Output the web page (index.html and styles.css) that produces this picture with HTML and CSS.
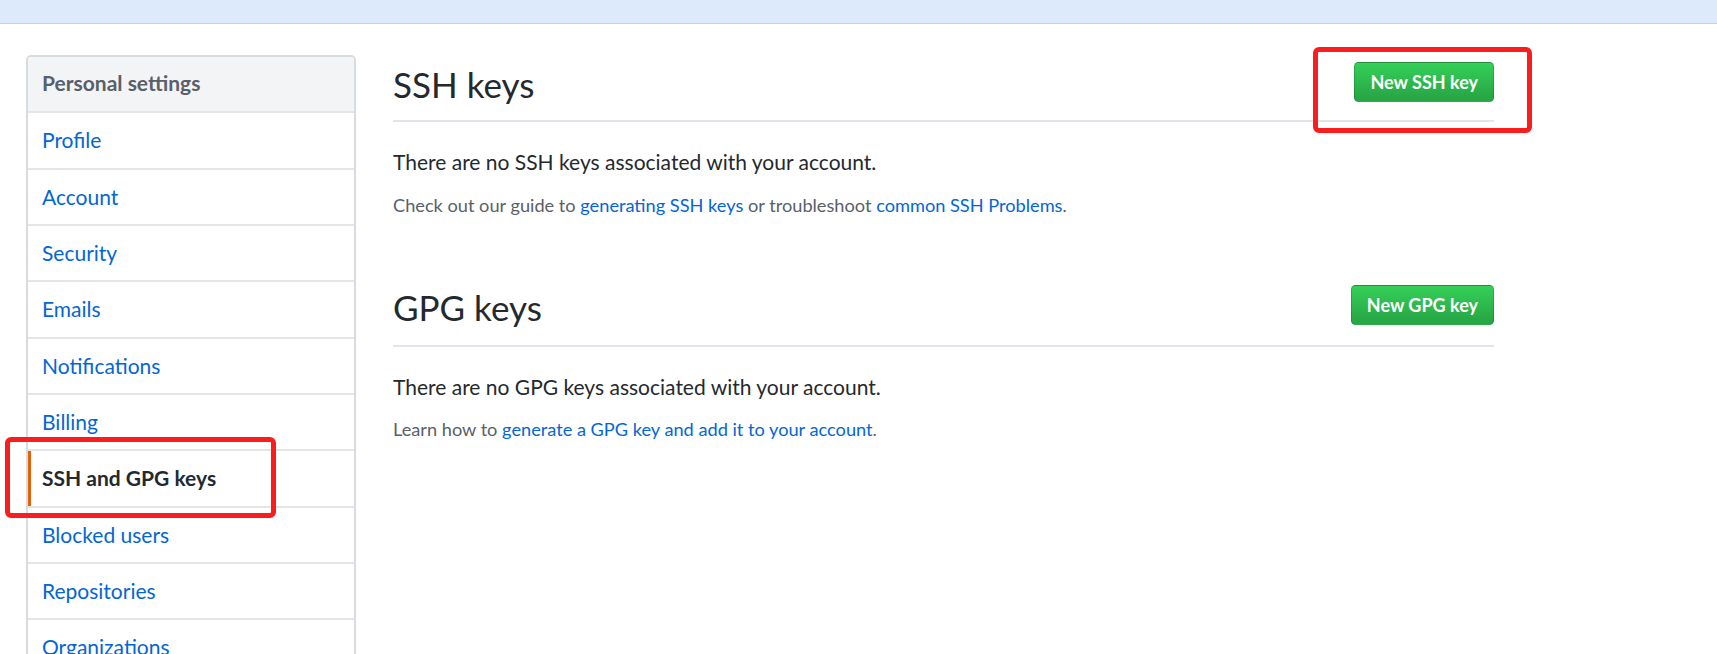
FILE: index.html
```html
<!DOCTYPE html>
<html lang="en">
<head>
<meta charset="utf-8">
<title>SSH and GPG keys</title>
<link rel="stylesheet" href="styles.css">
</head>
<body>
<div class="topbar"></div>
<div class="page">
  <nav class="sidebar">
    <div class="menu-heading">Personal settings</div>
    <a class="menu-item" href="#">Profile</a>
    <a class="menu-item" href="#">Account</a>
    <a class="menu-item" href="#">Security</a>
    <a class="menu-item" href="#">Emails</a>
    <a class="menu-item" href="#">Notifications</a>
    <a class="menu-item" href="#">Billing</a>
    <a class="menu-item selected" href="#">SSH and GPG keys</a>
    <a class="menu-item" href="#">Blocked users</a>
    <a class="menu-item" href="#">Repositories</a>
    <a class="menu-item" href="#">Organizations</a>
  </nav>
  <main class="main">
    <section class="subhead">
      <h2 class="subhead-heading">SSH keys</h2>
      <div class="subhead-actions"><a class="btn" href="#">New SSH key</a></div>
    </section>
    <p class="lead">There are no SSH keys associated with your account.</p>
    <p class="note">Check out our guide to <a href="#">generating SSH keys</a> or troubleshoot <a href="#">common SSH Problems</a>.</p>

    <section class="subhead subhead-spacious">
      <h2 class="subhead-heading">GPG keys</h2>
      <div class="subhead-actions"><a class="btn" href="#">New GPG key</a></div>
    </section>
    <p class="lead">There are no GPG keys associated with your account.</p>
    <p class="note">Learn how to <a href="#">generate a GPG key and add it to your account</a>.</p>
  </main>
</div>
<div class="annot annot-button"></div>
<div class="annot annot-menu"></div>
</body>
</html>
```
FILE: styles.css
```css
html, body {
  margin: 0;
  padding: 0;
  overflow: hidden;
  height: 654px;
}
body {
  position: relative;
  background: #ffffff;
  font-family: Lato, "Noto Sans", sans-serif;
  color: #24292e;
}
a { text-decoration: none; color: #0366d6; }

.topbar {
  height: 23px;
  background: #dceafc;
  border-bottom: 1px solid #c3d2e6;
}

.page {
  display: flex;
  align-items: flex-start;
  gap: 37px;
  padding: 31px 0 0 26px;
}

.sidebar {
  width: 326px;
  flex: none;
  border: 2px solid #d8dbdf;
  border-radius: 5px;
  display: flex;
  flex-direction: column;
  overflow: hidden;
}
.menu-heading {
  background: #f3f4f6;
  color: #586069;
  font-size: 21px;
  font-weight: 700;
  line-height: 51.33px;
  padding: 0 14px 3px;
  border-bottom: 2px solid #e3e5e8;
}
.menu-item {
  position: relative;
  display: block;
  font-size: 21px;
  line-height: 54.33px;
  padding: 0 14px;
  border-bottom: 2px solid #e3e5e8;
  color: #0366d6;
}
.menu-item.selected {
  color: #24292e;
  font-weight: 700;
}
.menu-item.selected::before {
  content: "";
  position: absolute;
  left: 0;
  top: 0;
  bottom: 0;
  width: 3px;
  background: #e36209;
}

.main {
  width: 1101px;
  padding-top: 1px;
}
.subhead {
  display: flex;
  align-items: flex-start;
  padding-bottom: 12px;
  border-bottom: 2px solid #e1e4e8;
  margin-bottom: 24px;
}
.subhead-spacious {
  margin-top: 60px;
  padding-bottom: 14px;
}
.subhead-heading {
  flex: 1;
  margin: 0;
  padding-top: 6px;
  font-size: 35px;
  line-height: 45px;
  font-weight: 400;
  color: #24292e;
}
.subhead-actions {
  margin: 6px 0;
}
.btn {
  display: inline-block;
  height: 40px;
  box-sizing: border-box;
  padding: 0 15px;
  line-height: 38px;
  font-size: 18px;
  font-weight: 700;
  color: #ffffff;
  background-image: linear-gradient(180deg, #34d058 0%, #28a745 90%);
  border: 1px solid rgba(27, 31, 35, 0.2);
  border-radius: 4.5px;
}

.lead {
  margin: 0 0 14px;
  font-size: 21px;
  line-height: 31.5px;
  color: #24292e;
}
.note {
  margin: 0;
  font-size: 18.2px;
  line-height: 27px;
  color: #586069;
}

.annot {
  position: absolute;
  box-sizing: border-box;
  border: 5px solid #fb1d1d;
  border-radius: 6px;
}
.annot-button {
  left: 1313px;
  top: 47px;
  width: 219px;
  height: 86px;
}
.annot-menu {
  left: 5px;
  top: 437px;
  width: 271px;
  height: 81px;
}
```
